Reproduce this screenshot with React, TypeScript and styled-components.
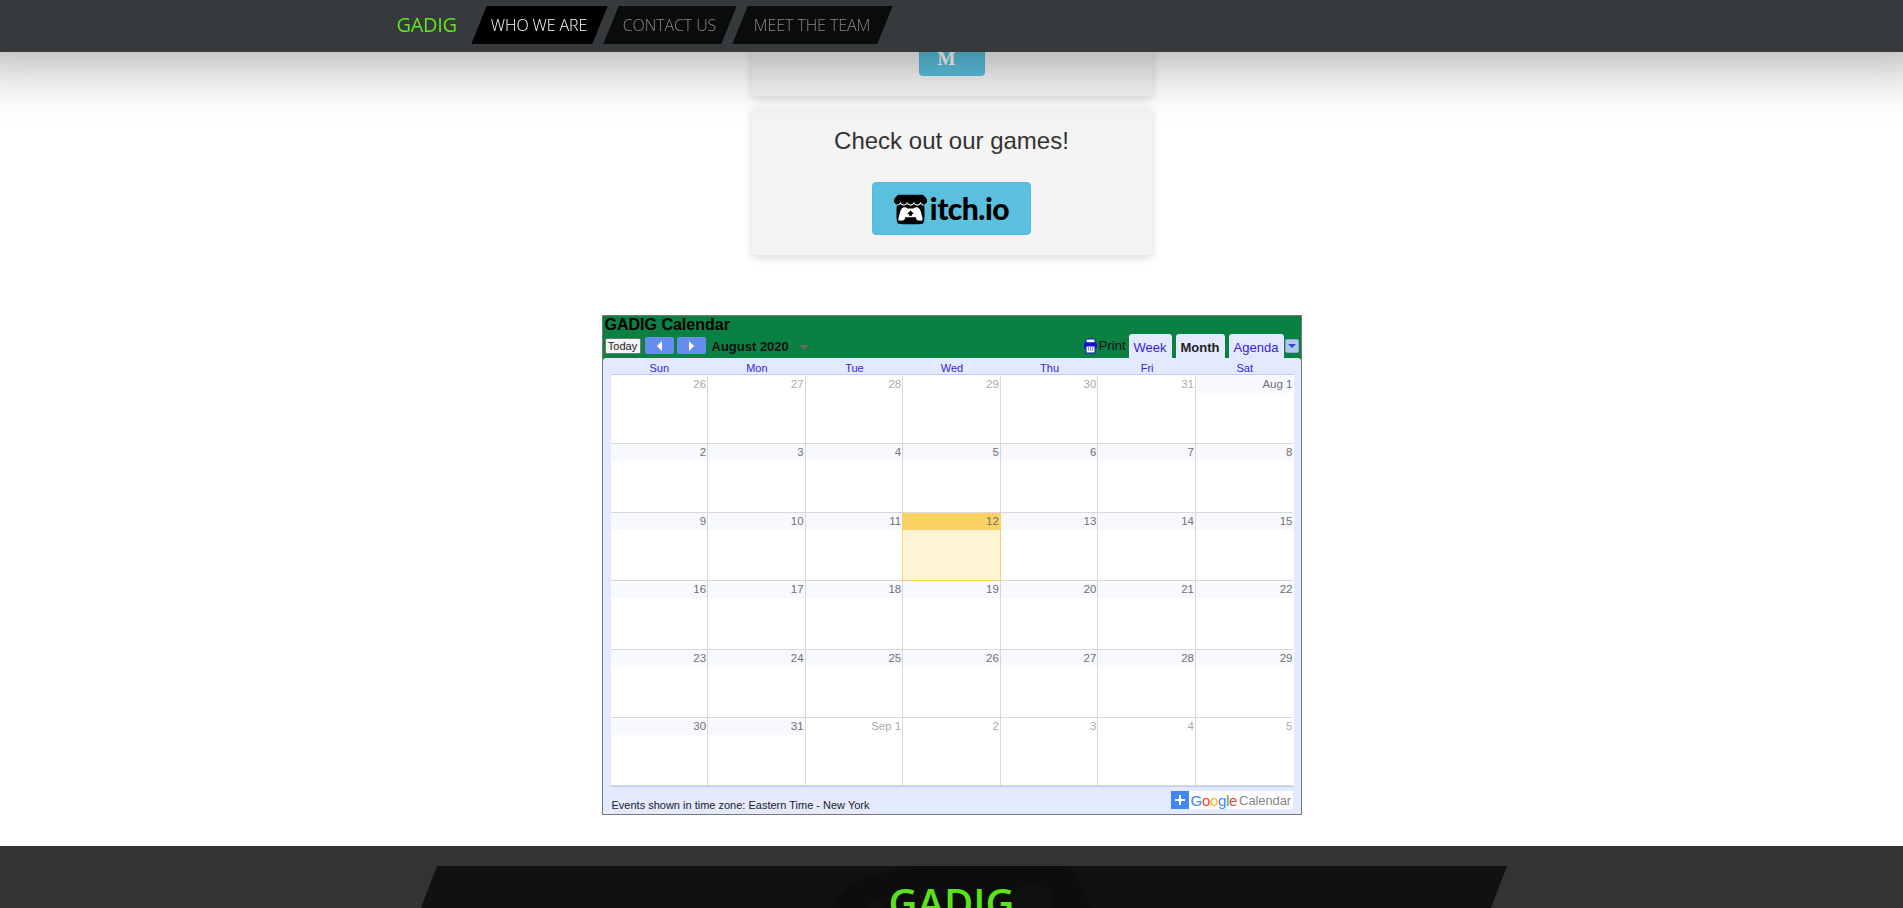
import React from 'react'
import styled, { createGlobalStyle } from 'styled-components'
import { SiItchdotio } from 'react-icons/si'

const GlobalStyle = createGlobalStyle`
  html, body {
    margin: 0;
    height: 100%;
    overflow: hidden;
    background: #fff;
    font-family: 'Liberation Sans', Arial, sans-serif;
  }
  * { box-sizing: border-box; }
`

const TopNav = styled.nav`
  position: fixed;
  top: 0;
  left: 0;
  right: 0;
  height: 52px;
  z-index: 10;
  background: #363a3d;
  box-shadow: 0 -30px 60px 40px rgba(0, 0, 0, 0.35);
`
const NavInner = styled.div`
  width: 1170px;
  height: 100%;
  margin: 0 auto;
  padding: 6px 0 8px 30px;
  display: flex;
  align-items: stretch;
  font-family: 'Open Sans', sans-serif;
`
const Brand = styled.a`
  width: 71px;
  line-height: 38px;
  font-size: 20px;
  letter-spacing: -0.3px;
  color: #62e41f;
`
const NavTab = styled.a<{ $active?: boolean; $w: number }>`
  position: relative;
  isolation: isolate;
  width: ${(p) => p.$w}px;
  margin-left: 11px;
  line-height: 38px;
  text-align: center;
  font-size: 16px;
  font-weight: 300;
  letter-spacing: -0.1px;
  color: ${(p) => (p.$active ? '#fff' : '#888')};
  &::before {
    content: '';
    position: absolute;
    inset: 0;
    z-index: -1;
    transform: skewX(-22deg);
    background: ${(p) => (p.$active ? '#000' : '#0a0c0c')};
  }
`

const Page = styled.main`
  display: flex;
  flex-direction: column;
  align-items: center;
`
const Card = styled.section<{ $top?: boolean }>`
  width: 400px;
  display: flex;
  flex-direction: column;
  align-items: center;
  background: #f4f4f4;
  border-radius: 4px;
  box-shadow: 0 3px 10px rgba(0, 0, 0, 0.15);
  height: ${(p) => (p.$top ? 96 : 147)}px;
  margin-top: ${(p) => (p.$top ? 0 : 12)}px;
  padding-top: ${(p) => (p.$top ? 23 : 20)}px;
`
const CardTitle = styled.h3`
  margin: 0;
  font-size: 24px;
  line-height: 26px;
  font-weight: 400;
  color: #333;
`
const InfoButton = styled.a`
  width: 66px;
  height: 53px;
  display: flex;
  justify-content: center;
  align-items: flex-end;
  padding: 0 10px 7px 0;
  background: #5bc0de;
  border: 1px solid #52bcdb;
  border-radius: 4px;
  color: #fff;
  font: bold 19px 'Liberation Serif', serif;
  line-height: 18px;
`
const ItchButton = styled.a`
  width: 159px;
  height: 53px;
  margin-top: 28px;
  padding-bottom: 2px;
  display: flex;
  justify-content: center;
  align-items: center;
  gap: 3px;
  background: #5bc0de;
  border: 1px solid #52bcdb;
  border-radius: 4px;
`
const ItchIcon = styled.span`
  position: relative;
  display: flex;
  width: 33px;
  height: 30px;
  &::before {
    content: '';
    position: absolute;
    left: 4px;
    right: 4px;
    top: 9px;
    bottom: 3px;
    background: #fff;
    border-radius: 3px;
  }
  svg {
    position: relative;
  }
`
const ItchText = styled.span`
  font: 900 30px Lato, sans-serif;
  letter-spacing: -0.5px;
  color: #000;
  line-height: 30px;
`

const Calendar = styled.div`
  width: 700px;
  height: 500px;
  margin-top: 60px;
  display: flex;
  flex-direction: column;
  border: 1px solid #777;
  background: #0b8043;
`
const CalHeader = styled.header`
  height: 42px;
  flex: none;
  padding: 0 2px;
`
const CalTitle = styled.div`
  height: 17px;
  font-size: 16px;
  font-weight: 700;
  line-height: 17px;
  color: #000;
`
const CalToolbar = styled.div`
  height: 25px;
  display: flex;
  align-items: flex-start;
`
const TodayButton = styled.button`
  width: 36px;
  height: 16px;
  margin: 5px 4px 0 0;
  padding: 0;
  border: 1px solid #777;
  border-radius: 2px;
  background: #f4f4f4;
  font: 11px 'Liberation Sans', sans-serif;
  color: #222;
`
const ArrowButton = styled.button<{ $dir: 'left' | 'right' }>`
  width: 29px;
  height: 17px;
  margin: 4px 3px 0 0;
  padding: 0;
  border: 0;
  border-radius: 2px;
  background: #668cf0;
  display: flex;
  align-items: center;
  justify-content: center;
  &::before {
    content: '';
    border-style: solid;
    border-width: 5px 0 5px 5px;
    border-color: transparent transparent transparent #fff;
    transform: ${(p) => (p.$dir === 'left' ? 'scaleX(-1)' : 'none')};
  }
`
const MonthLabel = styled.div`
  margin: 6px 11px 0 3px;
  font-size: 13px;
  font-weight: 700;
  line-height: 16px;
  color: #111;
`
const MonthCaret = styled.span`
  margin-top: 12px;
  border-style: solid;
  border-width: 5px 4.5px 0;
  border-color: #6d6a6a transparent transparent;
`
const PrintLink = styled.div`
  margin: 5px 3px 0 auto;
  display: flex;
  align-items: center;
  gap: 1px;
  font-size: 13px;
  line-height: 16px;
  color: #111;
  svg {
    flex: none;
  }
`
const CalTab = styled.div<{ $active?: boolean; $w: number }>`
  width: ${(p) => p.$w}px;
  height: 24px;
  margin-right: 4px;
  background: #e3e9ff;
  border-radius: 3px 3px 0 0;
  text-align: center;
  font-size: 13px;
  line-height: 27px;
  font-weight: ${(p) => (p.$active ? 700 : 400)};
  color: ${(p) => (p.$active ? '#222' : '#3a22cf')};
  align-self: flex-end;
`
const TabMenu = styled.div`
  width: 14px;
  height: 14px;
  margin: 6px 0 0 -3px;
  background: #b5c6ee;
  border: 1px solid #8fa6dc;
  border-radius: 2px;
  display: flex;
  align-items: center;
  justify-content: center;
  &::before {
    content: '';
    border-style: solid;
    border-width: 4px 4px 0;
    border-color: #1c4fc9 transparent transparent;
  }
`
const CalBody = styled.div`
  flex: 1;
  display: flex;
  flex-direction: column;
  background: #e3e9ff;
  border-radius: 3px 3px 0 0;
  padding: 0 7px 0 8px;
`
const DayHeads = styled.div`
  height: 17px;
  flex: none;
  display: grid;
  grid-template-columns: repeat(7, 1fr);
  border-bottom: 1px solid #bccdfa;
`
const DayHead = styled.div`
  font-size: 11px;
  line-height: 20px;
  text-align: center;
  color: #3a22cf;
`
const Grid = styled.div`
  display: grid;
  grid-template-columns: repeat(7, 1fr);
  grid-auto-rows: 68.4px;
  padding-top: 1px;
  background: #fff;
  border-bottom: 1px solid #bccdfa;
`
const Cell = styled.div<{ $today?: boolean; $last?: boolean }>`
  display: flex;
  flex-direction: column;
  background: ${(p) => (p.$today ? '#fef5d6' : '#fff')};
  border-right: ${(p) => (p.$last ? 0 : `1px solid ${p.$today ? '#fad163' : '#d8d8d8'}`)};
  border-left: ${(p) => (p.$today ? '1px solid #fad163' : 0)};
  border-bottom: 1px solid ${(p) => (p.$today ? '#fad163' : '#d8d8d8')};
  margin-left: ${(p) => (p.$today ? -1 : 0)}px;
`
const DateStrip = styled.div<{ $out?: boolean; $today?: boolean }>`
  height: 17px;
  padding-right: 1px;
  font-size: 11.5px;
  line-height: 16px;
  text-align: right;
  background: ${(p) => (p.$today ? '#fad163' : p.$out ? '#fff' : '#f8f9ff')};
  color: ${(p) => (p.$out ? '#aaa' : '#707070')};
`
const CalFooter = styled.footer`
  flex: 1;
  display: flex;
  align-items: flex-end;
  justify-content: space-between;
  padding: 0 1px 5px 0;
`
const ZoneNote = styled.div`
  font-size: 11px;
  line-height: 13px;
  margin: 0 0 -3px 1px;
  color: #222;
`
const GoogleBadge = styled.div`
  width: 122px;
  height: 18px;
  display: flex;
  align-items: center;
  background: #fff;
  font-size: 13px;
  letter-spacing: -0.1px;
  color: #888;
`
const PlusBox = styled.span`
  width: 18px;
  height: 18px;
  margin-right: 2px;
  background: #4285f4;
  display: flex;
  align-items: center;
  justify-content: center;
`
const GoogleWord = styled.span`
  font-size: 15px;
  letter-spacing: -0.3px;
  margin-right: 2px;
`
const Letter = styled.span<{ $c: string }>`
  color: ${(p) => p.$c};
`

const SiteFooter = styled.footer`
  height: 62px;
  margin-top: 31px;
  align-self: stretch;
  padding-top: 20px;
  background: #333;
  overflow: hidden;
`
const FooterPanel = styled.div`
  position: relative;
  z-index: 0;
  width: 1070px;
  height: 200px;
  margin: 0 auto;
  padding-top: 15px;
  text-align: center;
  font: 600 40px 'Open Sans', sans-serif;
  line-height: 44px;
  color: #5ae31a;
  &::before {
    content: '';
    position: absolute;
    inset: 0 -20px 0 20px;
    z-index: -2;
    background: #111;
    transform: skewX(-21deg);
    transform-origin: top;
  }
`
const FooterArt = styled.svg`
  position: absolute;
  top: 0;
  left: 403px;
  z-index: -1;
`

const weeks: string[][] = [
  ['26', '27', '28', '29', '30', '31', 'Aug 1'],
  ['2', '3', '4', '5', '6', '7', '8'],
  ['9', '10', '11', '12', '13', '14', '15'],
  ['16', '17', '18', '19', '20', '21', '22'],
  ['23', '24', '25', '26', '27', '28', '29'],
  ['30', '31', 'Sep 1', '2', '3', '4', '5'],
]
const dayNames = ['Sun', 'Mon', 'Tue', 'Wed', 'Thu', 'Fri', 'Sat']

function isOutside(w: number, d: number) {
  return (w === 0 && d < 6) || (w === 5 && d > 1)
}

function PrintIcon() {
  return (
    <svg width="15" height="16" viewBox="0 0 15 16">
      <rect x="3" y="1" width="9" height="4" rx="1" fill="#fff" stroke="#1212d0" />
      <rect x="1" y="4.5" width="13" height="6" rx="1.5" fill="#1212d0" />
      <rect x="3" y="8" width="9" height="7" fill="#fff" stroke="#1212d0" />
      <path d="M5 10h1M7 10h1M9 10h1M5 12h1M7 12h1M9 12h1" stroke="#1212d0" />
    </svg>
  )
}

export default function App() {
  return (
    <>
      <GlobalStyle />
      <TopNav>
        <NavInner>
          <Brand>GADIG</Brand>
          <NavTab $active $w={121}>WHO WE ARE</NavTab>
          <NavTab $w={118}>CONTACT US</NavTab>
          <NavTab $w={145}>MEET THE TEAM</NavTab>
        </NavInner>
      </TopNav>
      <Page>
        <Card $top>
          <InfoButton>M</InfoButton>
        </Card>
        <Card>
          <CardTitle>Check out our games!</CardTitle>
          <ItchButton>
            <ItchIcon>
              <SiItchdotio size={33} color="#000" />
            </ItchIcon>
            <ItchText>itch.io</ItchText>
          </ItchButton>
        </Card>
        <Calendar>
          <CalHeader>
            <CalTitle>GADIG Calendar</CalTitle>
            <CalToolbar>
              <TodayButton>Today</TodayButton>
              <ArrowButton $dir="left" />
              <ArrowButton $dir="right" />
              <MonthLabel>August 2020</MonthLabel>
              <MonthCaret />
              <PrintLink><PrintIcon />Print</PrintLink>
              <CalTab $w={43}>Week</CalTab>
              <CalTab $active $w={49}>Month</CalTab>
              <CalTab $w={55}>Agenda</CalTab>
              <TabMenu />
            </CalToolbar>
          </CalHeader>
          <CalBody>
            <DayHeads>
              {dayNames.map((d) => <DayHead key={d}>{d}</DayHead>)}
            </DayHeads>
            <Grid>
              {weeks.map((week, w) =>
                week.map((label, d) => {
                  const today = w === 2 && d === 3
                  return (
                    <Cell key={w + '-' + d} $today={today} $last={d === 6}>
                      <DateStrip $out={isOutside(w, d)} $today={today}>{label}</DateStrip>
                    </Cell>
                  )
                }),
              )}
            </Grid>
            <CalFooter>
              <ZoneNote>Events shown in time zone: Eastern Time - New York</ZoneNote>
              <GoogleBadge>
                <PlusBox>
                  <svg width="12" height="12" viewBox="0 0 12 12">
                    <path d="M6 1v10M1 6h10" stroke="#fff" strokeWidth="2" />
                  </svg>
                </PlusBox>
                <GoogleWord>
                  <Letter $c="#4285f4">G</Letter>
                  <Letter $c="#ea4335">o</Letter>
                  <Letter $c="#fbbc05">o</Letter>
                  <Letter $c="#4285f4">g</Letter>
                  <Letter $c="#34a853">l</Letter>
                  <Letter $c="#ea4335">e</Letter>
                </GoogleWord>
                Calendar
              </GoogleBadge>
            </CalFooter>
          </CalBody>
        </Calendar>
        <SiteFooter>
          <FooterPanel>
            <FooterArt width="280" height="44" viewBox="0 0 280 44">
              <path d="M10 44C20 24 38 12 60 8C72 5 85 2 95 0H247C258 10 266 26 270 44Z" fill="#0d0d0d" />
              <circle cx="213" cy="37" r="20" fill="#111" />
              <rect x="48" y="36" width="16" height="8" fill="#111" />
            </FooterArt>
            GADIG
          </FooterPanel>
        </SiteFooter>
      </Page>
    </>
  )
}
